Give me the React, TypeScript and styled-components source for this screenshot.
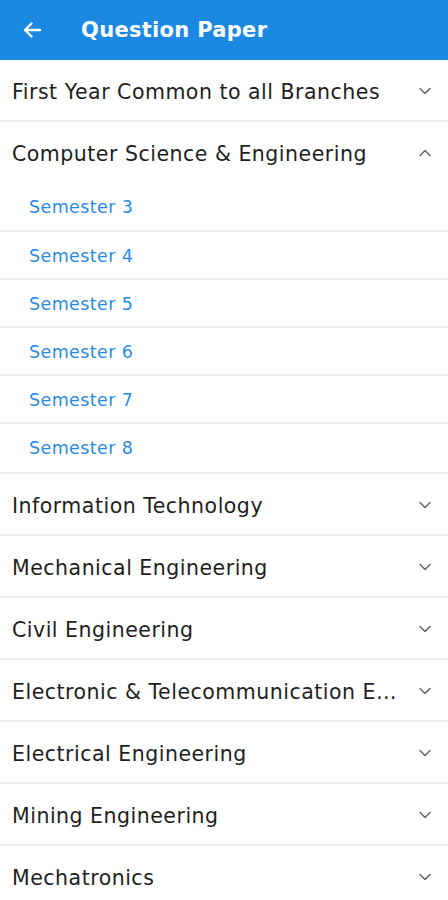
import React, { useState } from 'react';
import styled, { createGlobalStyle } from 'styled-components';

const GlobalStyle = createGlobalStyle`
  html, body {
    margin: 0;
    padding: 0;
    background: #fff;
  }
  body {
    font-family: 'DejaVu Sans', 'Liberation Sans', sans-serif;
  }
`;

type Branch = {
  name: string;
  semesters?: string[];
};

const branches: Branch[] = [
  { name: 'First Year Common to all Branches' },
  {
    name: 'Computer Science & Engineering',
    semesters: ['Semester 3', 'Semester 4', 'Semester 5', 'Semester 6', 'Semester 7', 'Semester 8'],
  },
  { name: 'Information Technology' },
  { name: 'Mechanical Engineering' },
  { name: 'Civil Engineering' },
  { name: 'Electronic & Telecommunication Engineering' },
  { name: 'Electrical Engineering' },
  { name: 'Mining Engineering' },
  { name: 'Mechatronics' },
];

const Chevron: React.FC<{ up?: boolean }> = ({ up }) => (
  <svg width="14" height="14" viewBox="0 0 14 14" fill="none">
    <path
      d={up ? 'M2 9.5 L7 4.5 L12 9.5' : 'M2 4.5 L7 9.5 L12 4.5'}
      stroke="#6b6b6b"
      strokeWidth="1.6"
      strokeLinecap="round"
      strokeLinejoin="round"
    />
  </svg>
);

const BackArrow = () => (
  <svg width="20" height="20" viewBox="0 0 20 20" fill="none">
    <path
      d="M18 10 H3 M9.5 3.5 L3 10 L9.5 16.5"
      stroke="#fff"
      strokeWidth="2.4"
      strokeLinecap="round"
      strokeLinejoin="round"
    />
  </svg>
);

const App: React.FC = () => {
  const [open, setOpen] = useState<string | null>('Computer Science & Engineering');

  return (
    <>
      <GlobalStyle />
      <Page>
        <TopBar>
          <BackButton>
            <BackArrow />
          </BackButton>
          <Title>Question Paper</Title>
        </TopBar>
        <List>
          {branches.map((b) => {
            const isOpen = open === b.name;
            return (
              <Section key={b.name}>
                <BranchRow onClick={() => setOpen(isOpen ? null : b.name)}>
                  <BranchName>{b.name}</BranchName>
                  <IconBox>
                    <Chevron up={isOpen} />
                  </IconBox>
                </BranchRow>
                {isOpen && b.semesters && (
                  <SemesterList>
                    {b.semesters.map((s) => (
                      <SemesterRow key={s}>{s}</SemesterRow>
                    ))}
                  </SemesterList>
                )}
              </Section>
            );
          })}
        </List>
      </Page>
    </>
  );
};

export default App;

const Page = styled.div`
  width: 448px;
  min-height: 900px;
  background: #fff;
`;

const TopBar = styled.header`
  height: 60px;
  background: #1b88e1;
  display: flex;
  align-items: center;
  padding-left: 22px;
  box-sizing: border-box;
`;

const BackButton = styled.div`
  width: 20px;
  height: 20px;
  display: flex;
  align-items: center;
  justify-content: center;
  margin-right: 39px;
`;

const Title = styled.h1`
  margin: 0;
  color: #fff;
  font-size: 21px;
  font-weight: 700;
  letter-spacing: 0.3px;
`;

const List = styled.div`
  display: flex;
  flex-direction: column;
`;

const Section = styled.div`
  border-bottom: 2px solid #ececec;
`;

const BranchRow = styled.div`
  height: 60px;
  box-sizing: border-box;
  padding: 4px 16px 0 12px;
  display: flex;
  align-items: center;
  justify-content: space-between;
  cursor: pointer;
`;

const BranchName = styled.span`
  font-size: 20.5px;
  letter-spacing: 0.5px;
  color: #1e1e1e;
  white-space: nowrap;
  overflow: hidden;
  text-overflow: ellipsis;
  max-width: 394px;
`;

const IconBox = styled.div`
  width: 14px;
  height: 14px;
  display: flex;
  margin-top: -3px;
`;

const SemesterList = styled.div`
  display: flex;
  flex-direction: column;
  padding-bottom: 2px;
`;

const SemesterRow = styled.div`
  height: 48px;
  box-sizing: border-box;
  padding: 2px 0 0 29px;
  display: flex;
  align-items: center;
  font-size: 17.5px;
  letter-spacing: 0.4px;
  color: #2a8be6;
  border-top: 2px solid #ececec;
  &:first-child {
    border-top: none;
  }
`;
